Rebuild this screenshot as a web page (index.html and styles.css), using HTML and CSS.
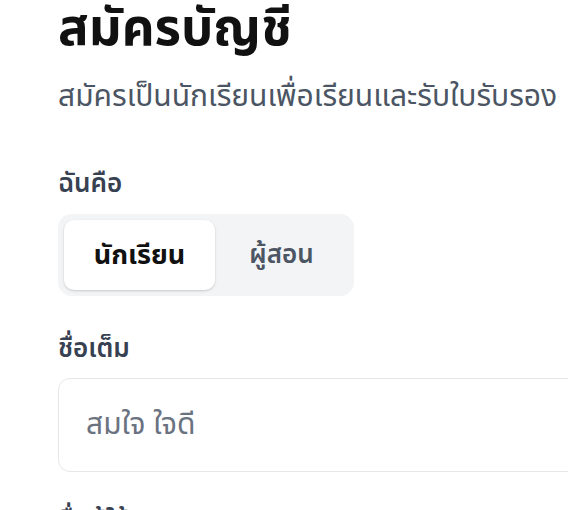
FILE: index.html
```html
<!DOCTYPE html>
<html lang="th">
<head>
<meta charset="utf-8">
<link rel="stylesheet" href="styles.css">
</head>
<body>
<main class="page">
  <h1 class="title">สมัครบัญชี</h1>
  <p class="subtitle">สมัครเป็นนักเรียนเพื่อเรียนและรับใบรับรอง</p>

  <div class="field field-role">
    <div class="label">ฉันคือ</div>
    <div class="segmented">
      <button class="seg seg-active">นักเรียน</button>
      <button class="seg">ผู้สอน</button>
    </div>
  </div>

  <div class="field field-name">
    <div class="label">ชื่อเต็ม</div>
    <div class="input"><span class="placeholder">สมใจ ใจดี</span></div>
  </div>

  <div class="field field-user">
    <div class="label">ชื่อผู้ใช้</div>
  </div>
</main>
</body>
</html>
```
FILE: styles.css
```css
html, body {
  margin: 0;
  padding: 0;
  background: #ffffff;
}
body {
  font-family: "Noto Sans Thai", "Noto Sans", sans-serif;
  color: #111827;
  overflow: hidden;
  height: 510px;
}
.page {
  padding: 0 0 0 58px;
  width: 560px;
}
.title {
  margin: 0;
  font-size: 51px;
  font-weight: 700;
  line-height: 60px;
  color: #111111;
}
.subtitle {
  margin: 17px 0 0;
  font-size: 30px;
  line-height: 40px;
  color: #4b5563;
}
.field-role {
  margin-top: 50px;
}
.field-name {
  margin-top: 36px;
}
.field-user {
  margin-top: 32px;
}
.label {
  font-size: 26px;
  font-weight: 600;
  color: #374151;
  line-height: 34px;
}
.segmented {
  margin-top: 13px;
  display: flex;
  width: 296px;
  height: 82px;
  box-sizing: border-box;
  padding: 6px;
  background: #f3f4f6;
  border-radius: 14px;
}
.seg {
  border: 0;
  background: transparent;
  font-family: inherit;
  font-size: 26px;
  font-weight: 600;
  color: #4b5563;
  flex: 1;
  height: 70px;
  border-radius: 10px;
  padding: 0;
}
.seg-active {
  flex: 0 0 151px;
  background: #ffffff;
  color: #111111;
  font-weight: 700;
  font-size: 27px;
  box-shadow: 0 1px 3px rgba(0,0,0,0.12), 0 1px 2px rgba(0,0,0,0.06);
}
.input {
  margin-top: 12px;
  width: 560px;
  height: 94px;
  border: 1px solid #e5e7eb;
  border-radius: 12px;
  display: flex;
  align-items: center;
  padding-left: 27px;
  box-sizing: border-box;
}
.placeholder {
  font-size: 30px;
  color: #6b7280;
}
```
